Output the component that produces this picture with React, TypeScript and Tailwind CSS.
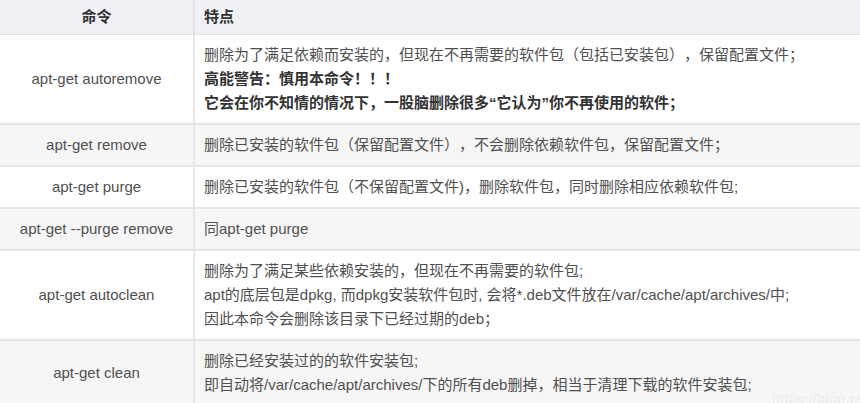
const FONT = "font-['Liberation_Sans','Noto_Sans_CJK_SC',sans-serif]";

type Row = { cmd: string; lines: Array<{ text: string; bold?: boolean }> };

const ROWS: Row[] = [
  {
    cmd: "apt-get autoremove",
    lines: [
      { text: "删除为了满足依赖而安装的，但现在不再需要的软件包（包括已安装包），保留配置文件；" },
      { text: "高能警告：慎用本命令！！！", bold: true },
      { text: "它会在你不知情的情况下，一股脑删除很多“它认为”你不再使用的软件；", bold: true },
    ],
  },
  {
    cmd: "apt-get remove",
    lines: [{ text: "删除已安装的软件包（保留配置文件），不会删除依赖软件包，保留配置文件；" }],
  },
  {
    cmd: "apt-get purge",
    lines: [{ text: "删除已安装的软件包（不保留配置文件)，删除软件包，同时删除相应依赖软件包;" }],
  },
  {
    cmd: "apt-get --purge remove",
    lines: [{ text: "同apt-get purge" }],
  },
  {
    cmd: "apt-get autoclean",
    lines: [
      { text: "删除为了满足某些依赖安装的，但现在不再需要的软件包;" },
      { text: "apt的底层包是dpkg, 而dpkg安装软件包时, 会将*.deb文件放在/var/cache/apt/archives/中;" },
      { text: "因此本命令会删除该目录下已经过期的deb；" },
    ],
  },
  {
    cmd: "apt-get clean",
    lines: [
      { text: "删除已经安装过的的软件安装包;" },
      { text: "即自动将/var/cache/apt/archives/下的所有deb删掉，相当于清理下载的软件安装包;" },
    ],
  },
];

export default function App() {
  return (
    <div
      className={`relative h-[403px] w-[860px] overflow-hidden bg-white text-[15px] [text-spacing-trim:space-all] ${FONT}`}
    >
      <div className="flex h-[35px] border-b border-[#e3e3e3] bg-[#eff1f4] font-bold text-[#333]">
        <div className="flex w-[195px] items-center justify-center border-r-2 border-[#e3e3e3]">命令</div>
        <div className="flex flex-1 items-center pl-[9px]">特点</div>
      </div>
      {ROWS.map((row, i) => (
        <div
          key={row.cmd}
          className={`flex border-b-2 border-[#e6e6e6] text-[#505050] ${i % 2 === 1 ? "bg-[#f6f6f6]" : "bg-white"}`}
        >
          <div className="flex w-[195px] shrink-0 items-center justify-center border-r-2 border-[#e6e6e6]">
            {row.cmd}
          </div>
          <div className="flex-1 pb-[8px] pl-[9px] pt-[8px] leading-[24px]">
            {row.lines.map((l) => (
              <div key={l.text} className={l.bold ? "font-bold text-[#333]" : ""}>
                {l.text}
              </div>
            ))}
          </div>
        </div>
      ))}
      <div className="absolute bottom-[-7px] left-[772px] whitespace-nowrap text-[15px] text-[#ececec]">
        https://blog.csdn.net
      </div>
    </div>
  );
}
